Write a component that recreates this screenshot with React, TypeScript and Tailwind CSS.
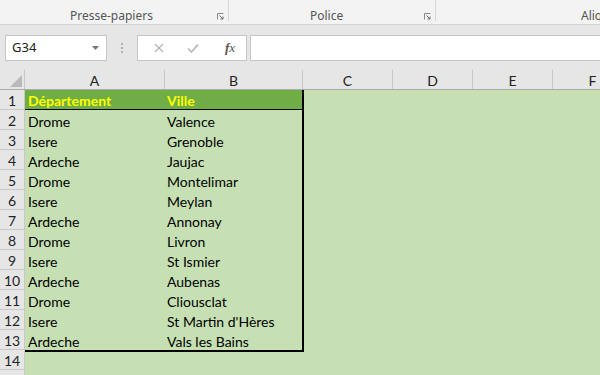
import React from "react";

const rows: [string, string][] = [
  ["Drome", "Valence"],
  ["Isere", "Grenoble"],
  ["Ardeche", "Jaujac"],
  ["Drome", "Montelimar"],
  ["Isere", "Meylan"],
  ["Ardeche", "Annonay"],
  ["Drome", "Livron"],
  ["Isere", "St Ismier"],
  ["Ardeche", "Aubenas"],
  ["Drome", "Cliousclat"],
  ["Isere", "St Martin d'Hères"],
  ["Ardeche", "Vals les Bains"],
];

const cellFont = { fontFamily: "Lato, 'Liberation Sans', sans-serif" };
const uiFont = { fontFamily: "'Noto Sans', 'Open Sans', sans-serif" };

function Launcher() {
  return (
    <svg width="7" height="7" viewBox="0 0 7 7" className="shrink-0">
      <path d="M0.5 0.5 H6.5 M0.5 0.5 V6.5" stroke="#8a8a8a" strokeWidth="1" fill="none" />
      <path d="M2.5 2.5 L6 6 M3.5 6 H6 V3.5" stroke="#6a6a6a" strokeWidth="1" fill="none" />
    </svg>
  );
}

function RowHeader({ n }: { n: number }) {
  return (
    <div
      className="h-[20px] w-[25px] shrink-0 bg-[#e6e6e6] border-r border-b border-[#c8c8c8] flex items-center justify-center pt-[2px] text-[14px] text-[#222]"
      style={cellFont}
    >
      {n}
    </div>
  );
}

export default function App() {
  return (
    <div className="w-[600px] h-[375px] overflow-hidden bg-[#c6e0b4] relative">
      {/* Ribbon group labels */}
      <div className="h-[25px] bg-[#f3f3f3] border-b border-[#d4d4d4] flex text-[12px] text-[#555]" style={uiFont}>
        <div className="w-[229px] shrink-0 border-r border-[#d8d8d8] h-[21px] relative">
          <span className="absolute left-[70px] top-[7px]">Presse-papiers</span>
          <div className="absolute left-[217px] top-[13px]"><Launcher /></div>
        </div>
        <div className="w-[207px] shrink-0 border-r border-[#d8d8d8] h-[21px] relative">
          <span className="absolute left-[81px] top-[7px]">Police</span>
          <div className="absolute left-[195px] top-[13px]"><Launcher /></div>
        </div>
        <div className="flex-1 relative h-[21px] overflow-hidden">
          <span className="absolute left-[145px] top-[7px] whitespace-nowrap">Alignement</span>
        </div>
      </div>

      {/* Formula bar */}
      <div className="h-[45px] bg-[#e6e6e6] flex items-center pl-[5px]">
        <div className="w-[102px] h-[26px] bg-white border border-[#c6c6c6] flex items-center justify-between pl-[6px] pr-[7px]">
          <span className="text-[13px] text-[#222]" style={uiFont}>G34</span>
          <svg width="7" height="4" viewBox="0 0 7 4"><path d="M0 0 H7 L3.5 4 Z" fill="#777" /></svg>
        </div>
        <div className="w-[30px] flex flex-col items-center gap-[2px]">
          <div className="w-[2px] h-[2px] bg-[#b0b0b0]" />
          <div className="w-[2px] h-[2px] bg-[#b0b0b0]" />
          <div className="w-[2px] h-[2px] bg-[#b0b0b0]" />
        </div>
        <div className="w-[110px] h-[26px] bg-white border border-[#c6c6c6] flex items-center">
          <div className="w-[42px] flex justify-center">
            <svg width="10" height="10" viewBox="0 0 10 10"><path d="M1 1 L9 9 M9 1 L1 9" stroke="#b5b5b5" strokeWidth="1.2" /></svg>
          </div>
          <div className="w-[26px] flex justify-center">
            <svg width="12" height="10" viewBox="0 0 12 10"><path d="M1 5.5 L4.5 9 L11 1.5" stroke="#b5b5b5" strokeWidth="1.6" fill="none" /></svg>
          </div>
          <div className="flex-1 flex justify-center pl-[8px]">
            <span className="italic text-[13px] text-[#555]" style={{ fontFamily: "'Liberation Serif', serif" }}>
              <span className="font-bold">f</span>x
            </span>
          </div>
        </div>
        <div className="ml-[3px] flex-1 h-[26px] bg-white border border-[#c6c6c6] border-r-0" />
      </div>

      {/* Column headers */}
      <div className="h-[20px] flex bg-[#e6e6e6] border-b border-[#ababab] text-[14px] text-[#222]" style={cellFont}>
        <div className="w-[25px] shrink-0 border-r border-[#c8c8c8] relative">
          <svg className="absolute right-[2px] bottom-[2px]" width="12" height="12" viewBox="0 0 12 12"><path d="M12 0 V12 H0 Z" fill="#b9b9b9" /></svg>
        </div>
        <div className="w-[140px] shrink-0 border-r border-[#c8c8c8] flex items-center justify-center pt-[1px]">A</div>
        <div className="w-[138px] shrink-0 border-r border-[#c8c8c8] flex items-center justify-center pt-[1px]">B</div>
        <div className="w-[90px] shrink-0 border-r border-[#c8c8c8] flex items-center justify-center pt-[1px]">C</div>
        <div className="w-[80px] shrink-0 border-r border-[#c8c8c8] flex items-center justify-center pt-[1px]">D</div>
        <div className="w-[80px] shrink-0 border-r border-[#c8c8c8] flex items-center justify-center pt-[1px]">E</div>
        <div className="w-[80px] shrink-0 border-r border-[#c8c8c8] flex items-center justify-center pt-[1px]">F</div>
      </div>

      {/* Grid body */}
      <div className="flex">
        <div className="flex flex-col">
          {Array.from({ length: 15 }, (_, i) => (
            <RowHeader key={i} n={i + 1} />
          ))}
        </div>
        <div className="flex flex-col">
          <div className="w-[279px] border-r-2 border-b-2 border-black text-[14px] text-black" style={cellFont}>
            <div className="h-[20px] flex bg-[#70ad47] border-b border-black font-bold text-[#ffff00]">
              <div className="w-[140px] pl-[3px] pt-[2px] flex items-center">Département</div>
              <div className="flex-1 pl-[2px] pt-[2px] flex items-center">Ville</div>
            </div>
            {rows.map(([a, b], i) => (
              <div key={i} className="h-[20px] flex">
                <div className="w-[140px] pl-[3px] pt-[2px] flex items-center">{a}</div>
                <div className="flex-1 pl-[2px] pt-[2px] flex items-center">{b}</div>
              </div>
            ))}
          </div>
        </div>
      </div>
    </div>
  );
}
